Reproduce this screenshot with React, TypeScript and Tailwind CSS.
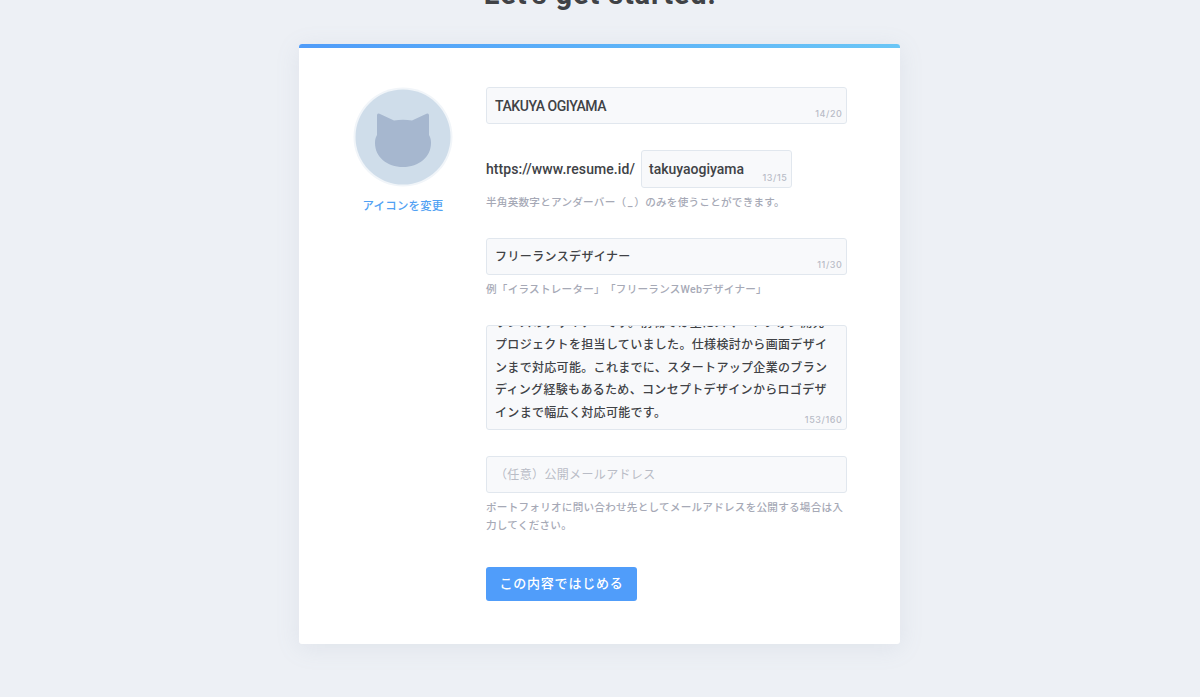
import type { ReactNode } from "react";

const fieldBox = "relative rounded-[3px] border border-[#e1e7ee] bg-[#f8f9fb]";

const Counter = ({ children }: { children: ReactNode }) => (
  <span className="absolute right-[3.5px] bottom-[4px] font-['Inter'] text-[9px] leading-[11px] font-medium tracking-[0.6px] text-[#b9bcc7]">
    {children}
  </span>
);

const Hint = ({ children }: { children: ReactNode }) => (
  <p className="mt-[5.5px] text-[10.6px] leading-[18.5px] font-medium tracking-[0.24px] whitespace-nowrap text-[#a6a9b6] [text-spacing-trim:space-all]">
    {children}
  </p>
);

const Avatar = () => (
  <svg viewBox="0 0 100 100" className="-mt-[0.5px] size-[100px]">
    <circle cx="50" cy="50" r="49.5" fill="#f1f5f9" />
    <circle cx="50" cy="50" r="47.5" fill="#cfddea" />
    <path
      d="M24 28.5 Q24 25.8 26.5 26.8 L41 33.6 Q50 31.8 59 33.6 L73.5 26.8 Q76 25.8 76 28.5 V48 C77.6 51 78 53 78 56 C78 70 66 80 50 80 C34 80 22 70 22 56 C22 53 22.4 51 24 48 Z"
      fill="#a6b7cf"
    />
  </svg>
);

const bio = [
  "ランスのデザイナーです。前職では主にスマートフォン開発",
  "プロジェクトを担当していました。仕様検討から画面デザイ",
  "ンまで対応可能。これまでに、スタートアップ企業のブラン",
  "ディング経験もあるため、コンセプトデザインからロゴデザ",
  "インまで幅広く対応可能です。",
];

const App = () => {
  return (
    <div className="h-[697px] overflow-hidden bg-[#edf0f5] font-['Roboto','Noto_Sans_CJK_JP',sans-serif] text-[#404246]">
      <h1 className="-mt-[26px] h-[70px] text-center font-['Roboto'] text-[29px] leading-[40px] font-bold tracking-[0.85px]">
        Let's get started!
      </h1>

      <main className="ml-[299px] h-[600px] w-[601px] overflow-hidden rounded-[3px] bg-white shadow-[0_4px_24px_rgba(130,150,170,0.13)]">
        <div className="h-[4px] bg-linear-to-r from-[#4f9cf9] to-[#6ac6f6]" />
        <div className="flex pt-[39px] pl-[54px]">
          <div className="flex w-[100px] flex-col items-center">
            <Avatar />
            <a href="#" className="mt-[10px] text-[11.4px] leading-[18px] font-medium tracking-[0.25px] whitespace-nowrap text-[#51a1f3]">
              アイコンを変更
            </a>
          </div>

          <form className="ml-[33px] w-[361px]">
            <div className={`${fieldBox} flex h-[37px] items-center px-[8px] pt-[1px]`}>
              <span className="text-[14px] font-medium tracking-[-0.45px]">TAKUYA OGIYAMA</span>
              <Counter>14/20</Counter>
            </div>

            <div className="mt-[26px] flex items-center">
              <span className="w-[155px] text-[14px] font-medium tracking-[0.08px] whitespace-nowrap">https://www.resume.id/</span>
              <div className={`${fieldBox} flex h-[38px] w-[151px] items-center px-[7px]`}>
                <span className="text-[14px] font-medium">takuyaogiyama</span>
                <Counter>13/15</Counter>
              </div>
            </div>
            <Hint>
              半角英数字とアンダーバー（<span className="inline-block w-[8px] text-center">_</span>）のみを使うことができます。
            </Hint>

            <div className={`${fieldBox} mt-[26px] flex h-[37px] items-center px-[8px] pt-[1px]`}>
              <span className="text-[12px] font-medium tracking-[0.38px]">フリーランスデザイナー</span>
              <Counter>11/30</Counter>
            </div>
            <Hint>例「イラストレーター」「フリーランスWebデザイナー」</Hint>

            <div className={`${fieldBox} mt-[26px] flex h-[105px] flex-col justify-end overflow-hidden px-[8px] pb-[5px]`}>
              {bio.map((line) => (
                <p key={line} className="shrink-0 text-[12px] leading-[22.5px] font-medium tracking-[0.32px] whitespace-nowrap">
                  {line}
                </p>
              ))}
              <Counter>153/160</Counter>
            </div>

            <div className={`${fieldBox} mt-[26px] flex h-[37px] items-center px-[8px] pt-[1px]`}>
              <span className="text-[12px] tracking-[0.35px] text-[#b9bcc6]">（任意）公開メールアドレス</span>
            </div>
            <Hint>
              ポートフォリオに問い合わせ先としてメールアドレスを公開する場合は入
              <br />
              力してください。
            </Hint>

            <button
              type="button"
              className="mt-[31.5px] flex h-[34px] w-[151px] items-center justify-center rounded-[3px] bg-[#509dfa] pb-px text-[13px] font-medium tracking-[0.8px] text-white"
            >
              この内容ではじめる
            </button>
          </form>
        </div>
      </main>
    </div>
  );
};

export default App;
